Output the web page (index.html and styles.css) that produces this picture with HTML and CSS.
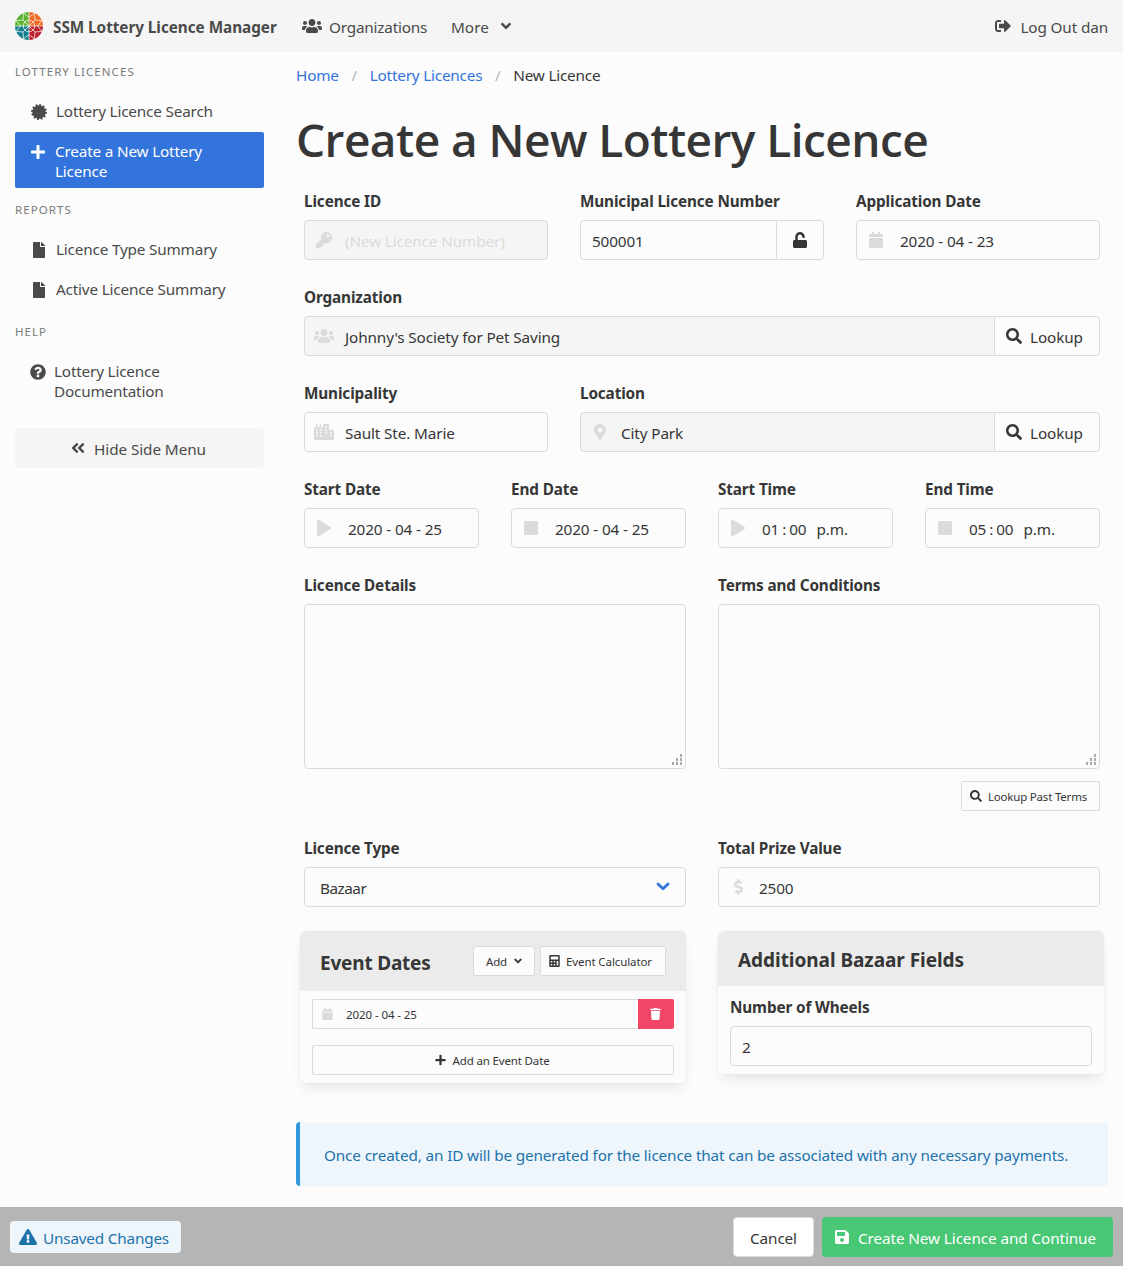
FILE: index.html
```html
<!DOCTYPE html>
<html lang="en">
<head>
<meta charset="utf-8">
<title>New Licence</title>
<link rel="stylesheet" href="styles.css">
</head>
<body>
<svg class="sprite" aria-hidden="true">
<symbol id="plus" viewBox="0 0 448 512"><path d="M416 208H272V64c0-17.67-14.33-32-32-32h-32c-17.67 0-32 14.33-32 32v144H32c-17.67 0-32 14.33-32 32v32c0 17.67 14.33 32 32 32h144v144c0 17.67 14.33 32 32 32h32c17.67 0 32-14.33 32-32V304h144c17.67 0 32-14.33 32-32v-32c0-17.67-14.33-32-32-32z"/></symbol>
<symbol id="search" viewBox="0 0 512 512"><path d="M505 442.7L405.3 343c-4.5-4.5-10.6-7-17-7H372c27.6-35.3 44-79.7 44-128C416 93.1 322.9 0 208 0S0 93.1 0 208s93.1 208 208 208c48.3 0 92.7-16.4 128-44v16.3c0 6.4 2.5 12.5 7 17l99.7 99.7c9.4 9.4 24.6 9.4 33.9 0l28.3-28.3c9.4-9.4 9.4-24.6.1-34zM208 336c-70.7 0-128-57.2-128-128 0-70.7 57.2-128 128-128 70.7 0 128 57.2 128 128 0 70.7-57.2 128-128 128z"/></symbol>
<symbol id="calendar" viewBox="0 0 448 512"><path d="M12 192h424c6.6 0 12 5.4 12 12v260c0 26.5-21.5 48-48 48H48c-26.5 0-48-21.5-48-48V204c0-6.6 5.4-12 12-12zm436-44v-36c0-26.5-21.5-48-48-48h-48V12c0-6.6-5.4-12-12-12h-40c-6.6 0-12 5.4-12 12v52H160V12c0-6.6-5.4-12-12-12h-40c-6.6 0-12 5.4-12 12v52H48C21.5 64 0 85.5 0 112v36c0 6.6 5.4 12 12 12h424c6.6 0 12-5.4 12-12z"/></symbol>
<symbol id="file" viewBox="0 0 384 512"><path d="M224 136V0H24C10.7 0 0 10.7 0 24v464c0 13.3 10.7 24 24 24h336c13.3 0 24-10.7 24-24V160H248c-13.2 0-24-10.8-24-24zm160-14.1v6.1H256V0h6.1c6.4 0 12.5 2.5 17 7l97.9 98c4.5 4.5 7 10.6 7 16.9z"/></symbol>
<symbol id="question" viewBox="0 0 512 512"><path d="M504 256c0 136.997-111.043 248-248 248S8 392.997 8 256C8 119.083 119.043 8 256 8s248 111.083 248 248zM262.655 90c-54.497 0-89.255 22.957-116.549 63.758-3.536 5.286-2.353 12.415 2.715 16.258l34.699 26.31c5.205 3.947 12.621 3.008 16.665-2.122 17.864-22.658 30.113-35.797 57.303-35.797 20.429 0 45.698 13.148 45.698 32.958 0 14.976-12.363 22.667-32.534 33.976C247.128 238.528 216 254.941 216 296v4c0 6.627 5.373 12 12 12h56c6.627 0 12-5.373 12-12v-1.333c0-28.462 83.186-29.647 83.186-106.667 0-58.002-60.165-102-116.531-102zM256 338c-25.365 0-46 20.635-46 46 0 25.364 20.635 46 46 46s46-20.636 46-46c0-25.365-20.635-46-46-46z"/></symbol>
<symbol id="angle-down" viewBox="0 0 320 512"><path d="M143 352.3L7 216.3c-9.4-9.4-9.4-24.6 0-33.9l22.6-22.6c9.4-9.4 24.6-9.4 33.9 0l96.4 96.4 96.4-96.4c9.4-9.4 24.6-9.4 33.9 0l22.6 22.6c9.4 9.4 9.4 24.6 0 33.9l-136 136c-9.2 9.4-24.4 9.4-33.8 0z"/></symbol>
<symbol id="angles-left" viewBox="0 0 448 512"><path d="M223.7 239l136-136c9.4-9.4 24.6-9.4 33.9 0l22.6 22.6c9.4 9.4 9.4 24.6 0 33.9L319.9 256l96.4 96.4c9.4 9.4 9.4 24.6 0 33.9L393.7 409c-9.4 9.4-24.6 9.4-33.9 0l-136-136c-9.5-9.4-9.5-24.6-.1-34zm-192 34l136 136c9.4 9.4 24.6 9.4 33.9 0l22.6-22.6c9.4-9.4 9.4-24.6 0-33.9L127.9 256l96.4-96.4c9.4-9.4 9.4-24.6 0-33.9L201.7 103c-9.4-9.4-24.6-9.4-33.9 0l-136 136c-9.5 9.4-9.5 24.6-.1 34z"/></symbol>
<symbol id="users" viewBox="0 0 640 512"><path d="M96 224c35.3 0 64-28.7 64-64s-28.7-64-64-64-64 28.7-64 64 28.7 64 64 64zm448 0c35.3 0 64-28.7 64-64s-28.7-64-64-64-64 28.7-64 64 28.7 64 64 64zm32 32h-64c-17.6 0-33.5 7.1-45.1 18.6 40.3 22.1 68.9 62 75.1 109.4h66c17.7 0 32-14.3 32-32v-32c0-35.3-28.7-64-64-64zm-256 0c61.9 0 112-50.1 112-112S381.9 32 320 32 208 82.1 208 144s50.1 112 112 112zm76.8 32h-8.3c-20.8 10-43.9 16-68.5 16s-47.6-6-68.5-16h-8.3C179.6 288 128 339.6 128 403.2V432c0 26.5 21.5 48 48 48h288c26.5 0 48-21.5 48-48v-28.8c0-63.6-51.6-115.2-115.2-115.2zm-223.7-13.4C161.5 263.1 145.6 256 128 256H64c-35.3 0-64 28.7-64 64v32c0 17.7 14.3 32 32 32h65.9c6.3-47.4 34.9-87.3 75.2-109.4z"/></symbol>
<symbol id="sign-out" viewBox="0 0 512 512"><path d="M497 273L329 441c-15 15-41 4.5-41-17v-96H152c-13.3 0-24-10.7-24-24v-96c0-13.3 10.7-24 24-24h136V88c0-21.4 25.9-32 41-17l168 168c9.3 9.4 9.3 24.6 0 34zM192 436v-40c0-6.6-5.4-12-12-12H96c-17.7 0-32-14.3-32-32V160c0-17.7 14.3-32 32-32h84c6.6 0 12-5.4 12-12V76c0-6.6-5.4-12-12-12H96c-53 0-96 43-96 96v192c0 53 43 96 96 96h84c6.6 0 12-5.4 12-12z"/></symbol>
<symbol id="key" viewBox="0 0 512 512"><path d="M512 176.001C512 273.203 433.202 352 336 352c-11.22 0-22.19-1.062-32.827-3.069l-24.012 27.014A23.999 23.999 0 0 1 261.223 384H224v40c0 13.255-10.745 24-24 24h-40v40c0 13.255-10.745 24-24 24H24c-13.255 0-24-10.745-24-24v-78.059c0-6.365 2.529-12.47 7.029-16.971l161.802-161.802C163.108 213.814 160 195.271 160 176 160 78.798 238.797.001 335.999 0 433.488-.001 512 78.511 512 176.001zM336 128c0 26.51 21.49 48 48 48s48-21.49 48-48-21.49-48-48-48-48 21.49-48 48z"/></symbol>
<symbol id="unlock" viewBox="0 0 448 512"><path d="M400 256H152V152.9c0-39.6 31.7-72.5 71.3-72.9 40-.4 72.7 32.1 72.7 72v16c0 13.3 10.7 24 24 24h32c13.3 0 24-10.7 24-24v-16C376 68 307.5-.3 223.5 0 139.5.3 72 69.5 72 153.5V256H48c-26.5 0-48 21.5-48 48v160c0 26.5 21.5 48 48 48h352c26.5 0 48-21.5 48-48V304c0-26.5-21.5-48-48-48z"/></symbol>
<symbol id="city" viewBox="0 0 640 512"><path fill-rule="evenodd" d="M616 192H480V24c0-13.26-10.74-24-24-24H312c-13.26 0-24 10.74-24 24v72h-64V16c0-8.84-7.16-16-16-16h-16c-8.84 0-16 7.16-16 16v80h-64V16c0-8.84-7.16-16-16-16H80c-8.84 0-16 7.16-16 16v80H24c-13.26 0-24 10.74-24 24v360c0 17.67 14.33 32 32 32h576c17.67 0 32-14.33 32-32V216c0-13.26-10.75-24-24-24zM68 164h52v52H68zM68 260h52v52H68zM68 356h52v52H68zM196 164h52v52h-52zM196 260h52v52h-52zM196 356h52v52h-52zM356 68h52v52h-52zM356 164h52v52h-52zM356 260h52v52h-52zM516 260h52v52h-52zM516 356h52v52h-52z"/></symbol>
<symbol id="marker" viewBox="0 0 384 512"><path d="M172.268 501.67C26.97 291.031 0 269.413 0 192 0 85.961 85.961 0 192 0s192 85.961 192 192c0 77.413-26.97 99.031-172.268 309.67-9.535 13.774-29.93 13.773-39.464 0zM192 272c44.183 0 80-35.817 80-80s-35.817-80-80-80-80 35.817-80 80 35.817 80 80 80z"/></symbol>
<symbol id="play" viewBox="0 0 448 512"><path d="M424.4 214.7L72.4 6.6C43.8-10.3 0 6.1 0 47.9V464c0 37.5 40.7 60.1 72.4 41.3l352-208c31.4-18.5 31.5-64.1 0-82.6z"/></symbol>
<symbol id="stop" viewBox="0 0 448 512"><rect y="32" width="448" height="448" rx="48"/></symbol>
<symbol id="dollar" viewBox="0 0 288 512"><path d="M209.2 233.4l-108-31.6C88.7 198.2 80 186.5 80 173.5c0-16.3 13.2-29.5 29.5-29.5h66.3c12.2 0 24.2 3.7 34.2 10.5 6.1 4.1 14.3 3.1 19.5-2l34.8-34c7.1-6.9 6.1-18.4-1.8-24.5C238 74.8 207.4 64.1 176 64V16c0-8.8-7.2-16-16-16h-32c-8.8 0-16 7.2-16 16v48h-2.5C45.8 64-5.4 118.7.5 183.6c4.2 46.1 39.4 83.6 83.8 96.6l102.5 30c12.5 3.7 21.2 15.3 21.2 28.3 0 16.3-13.2 29.5-29.5 29.5h-66.3C100 368 88 364.3 78 357.5c-6.1-4.1-14.3-3.1-19.5 2l-34.8 34c-7.1 6.9-6.1 18.4 1.8 24.5 24.5 19.2 55.1 29.9 86.5 30v48c0 8.8 7.2 16 16 16h32c8.8 0 16-7.2 16-16v-48.2c46.6-.9 90.3-28.6 105.7-72.7 21.5-61.6-14.6-124.8-72.5-141.7z"/></symbol>
<symbol id="calculator" viewBox="0 0 448 512"><path fill-rule="evenodd" d="M48 0h352a48 48 0 0 1 48 48v416a48 48 0 0 1-48 48H48a48 48 0 0 1-48-48V48A48 48 0 0 1 48 0zM64 64v128h320V64zM64 256v64h64v-64zM192 256v64h64v-64zM320 256v192h64V256zM64 384v64h64v-64zM192 384v64h64v-64z"/></symbol>
<symbol id="trash" viewBox="0 0 448 512"><path d="M432 32H312l-9.4-18.7A24 24 0 0 0 281.1 0H166.8a23.72 23.72 0 0 0-21.4 13.3L136 32H16A16 16 0 0 0 0 48v32a16 16 0 0 0 16 16h416a16 16 0 0 0 16-16V48a16 16 0 0 0-16-16zM53.2 467a48 48 0 0 0 47.9 45h245.8a48 48 0 0 0 47.9-45L416 128H32z"/></symbol>
<symbol id="warning" viewBox="0 0 576 512"><path d="M569.517 440.013C587.975 472.007 564.806 512 527.94 512H48.054c-36.937 0-59.999-40.055-41.577-71.987L246.423 23.985c18.467-32.009 64.72-31.951 83.154 0l239.94 416.028zM288 354c-25.405 0-46 20.595-46 46s20.595 46 46 46 46-20.595 46-46-20.595-46-46-46zm-43.673-165.346l7.418 136c.347 6.364 5.609 11.346 11.982 11.346h48.546c6.373 0 11.635-4.982 11.982-11.346l7.418-136c.375-6.874-5.098-12.654-11.982-12.654h-63.383c-6.884 0-12.356 5.78-11.981 12.654z"/></symbol>
<symbol id="save" viewBox="0 0 448 512"><path d="M433.941 129.941l-83.882-83.882A48 48 0 0 0 316.118 32H48C21.49 32 0 53.49 0 80v352c0 26.51 21.49 48 48 48h352c26.51 0 48-21.49 48-48V163.882a48 48 0 0 0-14.059-33.941zM224 416c-35.346 0-64-28.654-64-64 0-35.346 28.654-64 64-64s64 28.654 64 64c0 35.346-28.654 64-64 64zm96-304.52V212c0 6.627-5.373 12-12 12H76c-6.627 0-12-5.373-12-12V108c0-6.627 5.373-12 12-12h228.52c3.183 0 6.235 1.264 8.485 3.515l3.48 3.48A11.996 11.996 0 0 1 320 111.48z"/></symbol>
<symbol id="certificate" viewBox="0 0 512 512"><circle cx="256" cy="256" r="216"/><circle cx="256" cy="256" r="224" fill="none" stroke="currentColor" stroke-width="60" stroke-dasharray="58.64"/></symbol>
<symbol id="grip" viewBox="0 0 12 12"><path d="M9 0h2v3H9zM5 4h2v3H5zM9 4h2v3H9zM1 8h2v3H1zM5 8h2v3H5zM9 8h2v3H9z"/></symbol>
</svg>

<nav class="navbar">
  <a class="brand">
    <svg class="logo" viewBox="0 0 28 28">
      <path fill="#5cb531" d="M14 14H0A14 14 0 0 1 14 0z"/>
      <path fill="#f26a21" d="M14 14V0A14 14 0 0 1 28 14z"/>
      <path fill="#be1e2d" d="M14 14h14A14 14 0 0 1 14 28z"/>
      <path fill="#14808f" d="M14 14v14A14 14 0 0 1 0 14z"/>
      <g stroke="#f5f5f5" stroke-width=".75" fill="none">
        <path d="M14 0v28M0 14h28M8 8l12 12M20 8L8 20"/>
        <path d="M26.900 19.400L20 20l-.6 6.900L14 22.500l-5.400 4.400L8 20l-6.900-.6L5.500 14 1.100 8.600 8 8l.6-6.900L14 5.500l5.400-4.400L20 8l6.900.6-4.400 5.400z"/>
        <circle cx="14" cy="14" r="5.800"/>
      </g>
    </svg>
    <strong>SSM Lottery Licence Manager</strong>
  </a>
  <a class="nav-item nav-orgs"><svg class="ic w20"><use href="#users"/></svg><span>Organizations</span></a>
  <a class="nav-item nav-more"><span>More</span><svg class="ic w10"><use href="#angle-down"/></svg></a>
  <a class="nav-item nav-end"><svg class="ic w16"><use href="#sign-out"/></svg><span>Log Out dan</span></a>
</nav>

<div class="layout">
  <aside class="side">
    <p class="menu-label">LOTTERY LICENCES</p>
    <ul class="menu">
      <li><a><svg class="ic w16"><use href="#certificate"/></svg><span>Lottery Licence Search</span></a></li>
      <li><a class="active"><svg class="ic w14"><use href="#plus"/></svg><span>Create a New Lottery<br>Licence</span></a></li>
    </ul>
    <p class="menu-label">REPORTS</p>
    <ul class="menu">
      <li><a><svg class="ic w12"><use href="#file"/></svg><span>Licence Type Summary</span></a></li>
      <li><a><svg class="ic w12"><use href="#file"/></svg><span>Active Licence Summary</span></a></li>
    </ul>
    <p class="menu-label">HELP</p>
    <ul class="menu">
      <li><a class="doc"><svg class="ic w16"><use href="#question"/></svg><span>Lottery Licence<br>Documentation</span></a></li>
    </ul>
    <button class="hide-menu"><svg class="ic w14"><use href="#angles-left"/></svg><span>Hide Side Menu</span></button>
  </aside>

  <main class="main">
    <nav class="crumbs"><a>Home</a><i>/</i><a>Lottery Licences</a><i>/</i><span>New Licence</span></nav>
    <h1>Create a New Lottery Licence</h1>

    <form class="form">
      <div class="row cols-3">
        <div class="field"><label>Licence ID</label>
          <div class="control disabled"><span class="lead"><svg class="ic w16"><use href="#key"/></svg></span><span class="placeholder">(New Licence Number)</span></div></div>
        <div class="field"><label>Municipal Licence Number</label>
          <div class="group"><div class="control plain"><span>500001</span></div><button type="button" class="addon lock"><svg class="ic w14"><use href="#unlock"/></svg></button></div></div>
        <div class="field"><label>Application Date</label>
          <div class="control date"><span class="lead"><svg class="ic w14"><use href="#calendar"/></svg></span><span>2020 - 04 - 23</span></div></div>
      </div>
      <div class="row">
        <div class="field"><label>Organization</label>
          <div class="group"><div class="control shaded"><span class="lead"><svg class="ic w20"><use href="#users"/></svg></span><span>Johnny's Society for Pet Saving</span></div><button type="button" class="addon"><svg class="ic w16"><use href="#search"/></svg><span>Lookup</span></button></div></div>
      </div>
      <div class="row cols-3">
        <div class="field"><label>Municipality</label>
          <div class="control"><span class="lead"><svg class="ic w20"><use href="#city"/></svg></span><span>Sault Ste. Marie</span></div></div>
        <div class="field span-2"><label>Location</label>
          <div class="group"><div class="control shaded"><span class="lead"><svg class="ic w12"><use href="#marker"/></svg></span><span>City Park</span></div><button type="button" class="addon"><svg class="ic w16"><use href="#search"/></svg><span>Lookup</span></button></div></div>
      </div>
      <div class="row cols-4">
        <div class="field"><label>Start Date</label>
          <div class="control date"><span class="lead"><svg class="ic w14"><use href="#play"/></svg></span><span>2020 - 04 - 25</span></div></div>
        <div class="field"><label>End Date</label>
          <div class="control date"><span class="lead"><svg class="ic w14"><use href="#stop"/></svg></span><span>2020 - 04 - 25</span></div></div>
        <div class="field"><label>Start Time</label>
          <div class="control date"><span class="lead"><svg class="ic w14"><use href="#play"/></svg></span><span class="time"><span>01</span><span>:</span><span>00</span><span class="ampm">p.m.</span></span></div></div>
        <div class="field"><label>End Time</label>
          <div class="control date"><span class="lead"><svg class="ic w14"><use href="#stop"/></svg></span><span class="time"><span>05</span><span>:</span><span>00</span><span class="ampm">p.m.</span></span></div></div>
      </div>
      <div class="row cols-2">
        <div class="field"><label>Licence Details</label>
          <div class="area"><svg class="grip"><use href="#grip"/></svg></div></div>
        <div class="field"><label>Terms and Conditions</label>
          <div class="area"><svg class="grip"><use href="#grip"/></svg></div>
          <button type="button" class="small past"><svg class="ic w12"><use href="#search"/></svg><span>Lookup Past Terms</span></button></div>
      </div>
      <div class="row cols-2">
        <div class="field"><label>Licence Type</label>
          <div class="control select"><span>Bazaar</span><svg class="caret" viewBox="0 0 14 9"><path d="M2 2l5 4.800L12 2"/></svg></div></div>
        <div class="field"><label>Total Prize Value</label>
          <div class="control"><span class="lead"><svg class="ic w9"><use href="#dollar"/></svg></span><span>2500</span></div></div>
      </div>
    </form>

    <div class="panels">
      <section class="panel">
        <header class="panel-head events"><h2>Event Dates</h2>
          <button class="small add"><span>Add</span><svg class="ic w8"><use href="#angle-down"/></svg></button>
          <button class="small calc"><svg class="ic w11"><use href="#calculator"/></svg><span>Event Calculator</span></button></header>
        <div class="panel-body">
          <div class="event"><div class="event-date"><svg class="ic w11"><use href="#calendar"/></svg><span>2020 - 04 - 25</span></div><button class="delete"><svg class="ic w11"><use href="#trash"/></svg></button></div>
          <button class="small wide"><svg class="ic w11"><use href="#plus"/></svg><span>Add an Event Date</span></button>
        </div>
      </section>
      <section class="panel">
        <header class="panel-head"><h2>Additional Bazaar Fields</h2></header>
        <div class="panel-body field"><label>Number of Wheels</label><div class="control plain"><span>2</span></div></div>
      </section>
    </div>

    <div class="message">Once created, an ID will be generated for the licence that can be associated with any necessary payments.</div>
  </main>
</div>

<footer class="footer">
  <span class="tag"><svg class="ic w18"><use href="#warning"/></svg><span>Unsaved Changes</span></span>
  <button class="cancel"><span>Cancel</span></button>
  <button class="create"><svg class="ic w14"><use href="#save"/></svg><span>Create New Licence and Continue</span></button>
</footer>
</body>
</html>
```
FILE: styles.css
```css
* { box-sizing: border-box; }
body {
  margin: 0;
  height: 1266px;
  display: flex;
  flex-direction: column;
  background: #fcfcfc;
  color: #363636;
  font: 15.3px/24px "Noto Sans", "Open Sans", sans-serif;
  letter-spacing: -.13px;
}
button { font: inherit; letter-spacing: inherit; color: inherit; margin: 0; padding: 0; cursor: pointer; }
h1, h2, p, ul { margin: 0; padding: 0; list-style: none; }
.sprite { position: absolute; width: 0; height: 0; }
.ic { flex: none; height: 16px; fill: currentColor; }
.w8 { width: 8px; height: 12px; }
.w9 { width: 9px; }
.w10 { width: 10px; }
.w11 { width: 11px; height: 12px; }
.w12 { width: 12px; }
.w14 { width: 14px; }
.w16 { width: 16px; }
.w18 { width: 18px; }
.w20 { width: 20px; }

.navbar { height: 52px; flex: none; display: flex; align-items: center; padding: 0 15px; background: #f5f5f5; color: #4a4a4a; }
.navbar span, .navbar strong { padding-top: 2px; }
.brand { display: flex; align-items: center; gap: 10px; width: 287px; letter-spacing: -.04px; }
.logo { width: 28px; height: 28px; }
.nav-item { display: flex; align-items: center; }
.nav-orgs { gap: 7px; width: 149px; letter-spacing: -.2px; }
.nav-more { gap: 12px; letter-spacing: 0; }
.nav-end { gap: 9px; margin-left: auto; }

.layout { flex: 1; display: flex; gap: 32px; padding: 0 15px; min-height: 0; }
.side { width: 249px; flex: none; color: #4a4a4a; letter-spacing: -.18px; }
.menu-label { font-size: 11.5px; line-height: 14px; letter-spacing: 1.06px; color: #7a7a7a; padding-top: 13px; margin-bottom: 13px; }
.menu + .menu-label { padding-top: 15px; }
.menu a { display: flex; gap: 9px; padding: 9px 16px 11px; line-height: 20px; }
.menu a .ic { margin-top: 3px; }
.menu .w12 { margin: 0 2px; }
.menu .active { background: #3273dc; color: #fff; border-radius: 2px; padding-bottom: 7px; }
.menu .w14 { margin: 0 1px 0 0; }
.menu .doc { gap: 8px; padding-left: 15px; }
.hide-menu { width: 249px; height: 40px; margin-top: 16px; border: 0; border-radius: 4px; background: #f5f5f5; display: flex; align-items: center; justify-content: center; gap: 9px; letter-spacing: -.08px; padding-right: 2px; }
.hide-menu span { padding-top: 2px; }

.main { flex: 1; min-width: 0; }
.crumbs { display: flex; padding-top: 11px; letter-spacing: -.2px; }
.crumbs a { color: #3273dc; }
.crumbs i { font-style: normal; color: #b5b5b5; width: 31px; text-align: center; }
h1 { font: 600 46px/54px "Open Sans", sans-serif; letter-spacing: -.55px; padding: 25px 0 22px; white-space: nowrap; }

.form { margin: 0 8px; display: flex; flex-direction: column; gap: 24px; }
.row { display: grid; gap: 32px; }
.cols-2 { grid-template-columns: repeat(2, 1fr); }
.cols-3 { grid-template-columns: repeat(3, 1fr); }
.cols-4 { grid-template-columns: repeat(4, 1fr); }
.span-2 { grid-column: span 2; }
.field { display: flex; flex-direction: column; }
label { font-weight: 700; line-height: 24px; margin-bottom: 8px; padding-top: 1px; height: 24px; white-space: nowrap; }
.group { display: flex; }
.control { flex: 1; height: 40px; flex-basis: 40px; display: flex; align-items: center; border: 1px solid #dbdbdb; border-radius: 4px; padding-top: 1px; }
.lead { width: 38px; margin-right: 2px; display: flex; justify-content: center; color: #dbdbdb; margin-top: -1px; }
.plain { padding-left: 11px; }
.date .lead { margin-right: 5px; }
.disabled, .shaded { background: #f5f5f5; }
.placeholder { color: #dbdbdb; }
.group .control { border-radius: 4px 0 0 4px; }
.addon { width: 106px; height: 40px; margin-left: -1px; border: 1px solid #dbdbdb; border-radius: 0 4px 4px 0; background: #fcfcfc; display: flex; align-items: center; justify-content: center; gap: 8px; }
.addon .w16 { margin-left: -5px; }
.addon span { padding-top: 1px; }
.lock { width: 48px; }
.time { display: flex; gap: 3px; }
.ampm { margin-left: 7px; }
.area { height: 165px; border: 1px solid #dbdbdb; border-radius: 4px; display: flex; justify-content: flex-end; align-items: flex-end; padding: 2px; }
.grip { width: 12px; height: 12px; fill: #a8a8a8; }
.small { height: 30px; border: 1px solid #dbdbdb; border-radius: 2px; background: #fcfcfc; font-size: 11.5px; letter-spacing: -.15px; display: flex; align-items: center; justify-content: center; gap: 6px; }
.small span { padding-top: 1px; }
.past { width: 139px; margin: 12px 0 0 auto; justify-content: flex-start; padding-left: 8px; letter-spacing: -.2px; }
.past .ic { height: 12px; }
.select { padding-left: 15px; padding-right: 15px; justify-content: space-between; letter-spacing: -.5px; }
.caret { width: 14px; height: 9px; fill: none; stroke: #3273dc; stroke-width: 2.8; stroke-linecap: round; stroke-linejoin: round; margin-top: -2px; }

.panels { display: grid; grid-template-columns: 1fr 1fr; gap: 32px; align-items: start; margin: 24px 4px 0; }
.panel { border-radius: 6px; box-shadow: 0 8px 14px -4px rgba(10,10,10,.1), 0 0 0 1px rgba(10,10,10,.02); }
.panel-head { display: flex; align-items: center; background: #ebebeb; height: 55px; border-radius: 6px 6px 0 0; padding: 3px 20px 0; }
.panel-head h2 { font-size: 19px; line-height: 25px; letter-spacing: -.05px; }
.events { height: 60px; padding-top: 4px; }
.events h2 { letter-spacing: -.2px; }
.events .small { margin-top: -4px; }
.add { width: 62px; margin-left: auto; gap: 7px; }
.calc { width: 126px; margin-left: 5px; justify-content: flex-start; padding-left: 8px; letter-spacing: -.1px; }
.panel-body { padding: 8px 12px; }
.event { display: flex; height: 30px; margin-bottom: 16px; font-size: 11.5px; letter-spacing: -.08px; }
.event-date { flex: 1; border: 1px solid #dbdbdb; border-right: 0; border-radius: 2px 0 0 2px; display: flex; align-items: center; gap: 13px; padding-left: 9px; }
.event-date .ic { color: #dbdbdb; }
.event-date span { padding-top: 1px; }
.delete { width: 36px; border: 0; background: #f14668; color: #fff; border-radius: 0 2px 2px 0; display: flex; align-items: center; justify-content: center; padding-right: 1px; }
.wide { width: 100%; gap: 7px; padding-right: 2px; }
.message { margin-top: 39px; height: 64px; border-left: 4px solid #3298dc; border-radius: 4px; background: #eef6fc; color: #1d72aa; padding: 21px 24px; white-space: nowrap; letter-spacing: -.143px; }

.footer { flex: none; height: 59px; display: flex; align-items: center; background: #b5b5b5; padding: 0 10px; }
.footer span span, .footer button span { padding-top: 2px; }
.tag { display: flex; align-items: center; gap: 6px; width: 171px; height: 32px; border-radius: 4px; background: #eef6fc; color: #1d72aa; padding-left: 9px; letter-spacing: -.19px; }
.cancel { margin-left: auto; width: 81px; height: 40px; border: 1px solid #dbdbdb; border-radius: 4px; background: #fff; display: flex; align-items: center; justify-content: center; }
.create { margin-left: 8px; width: 291px; height: 40px; border: 0; border-radius: 4px; background: #48c774; color: #fff; display: flex; align-items: center; gap: 9px; padding-left: 13px; white-space: nowrap; letter-spacing: -.1px; }
```
